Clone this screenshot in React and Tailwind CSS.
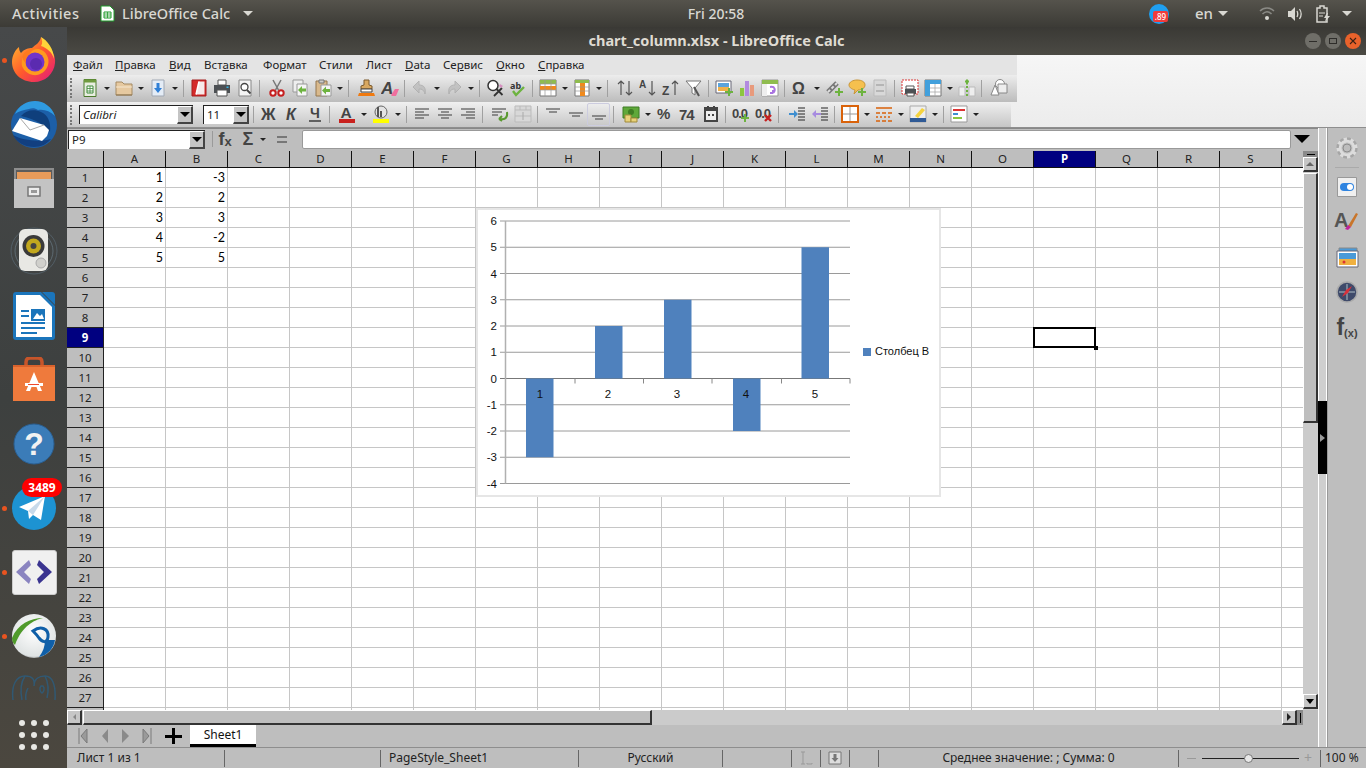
import { Fragment } from "react";

const UI = "font-['Noto_Sans',sans-serif]";

const S = ({ children, w = 18, vb = "0 0 18 18" }) => (
  <svg width={w} height={w} viewBox={vb} className="block">
    {children}
  </svg>
);

const lines = (ys, x1, x2, c = "#555") =>
  ys.map((y, i) => <path key={i} d={`M${x1[i] ?? x1[0]} ${y}H${x2[i] ?? x2[0]}`} stroke={c} strokeWidth="1.2" />);

const ICONS = {
  new: (
    <>
      <path d="M3 .5h12v17H3z" fill="#e8eee0" stroke="#4b7a2b" />
      <path d="M3 .5h12v3H3z" fill="#6f9a3f" />
      <path d="M6 7h6v7H6z" fill="#fff" stroke="#3f8a3a" />
      <path d="M6 9.500h6M6 12h6M9 7v7" stroke="#3f8a3a" strokeWidth=".8" />
    </>
  ),
  open: (
    <>
      <path d="M1 3h6l2 2h8v11H1z" fill="#e6c9a0" stroke="#a58a62" />
      <path d="M1 8h16" stroke="#f5e6cf" />
      <path d="M1 16h16" stroke="#8b7450" />
    </>
  ),
  save: (
    <>
      <path d="M3 1h12v16H3z" fill="#e4ecf6" stroke="#a0a8b4" />
      <path d="M7.500 4h3v5h2.500L9 14 5 9h2.500z" fill="#2f7fd6" />
    </>
  ),
  pdf: (
    <>
      <path d="M2 1h14v16H2z" fill="#d42a2a" stroke="#a51f1f" />
      <path d="M9 2.500h5.500v13H6z" fill="#f6eaea" />
      <path d="M9 2.500 6 15.500" stroke="#fff" strokeWidth="1.500" />
    </>
  ),
  print: (
    <>
      <path d="M5 1h8v5H5z" fill="#fff" stroke="#555" />
      <path d="M1 6h16v8H1z" fill="#4c5054" />
      <path d="M4 11h10v6H4z" fill="#fff" stroke="#555" />
      <path d="M13.500 7.500h2v1.500h-2z" fill="#35b4e6" />
    </>
  ),
  preview: (
    <>
      <path d="M3 1h12v16H3z" fill="#f4f4f4" stroke="#888" />
      <circle cx="8.500" cy="8" r="3.500" fill="#fff" stroke="#444" strokeWidth="1.300" />
      <path d="m11 11 3.500 3.500" stroke="#444" strokeWidth="1.800" />
    </>
  ),
  cut: (
    <>
      <path d="M5 1l5.500 10M13 1 7.500 11" stroke="#777" strokeWidth="1.500" />
      <circle cx="5" cy="14" r="2.700" fill="#fff" stroke="#c62020" strokeWidth="2" />
      <circle cx="13" cy="14" r="2.700" fill="#fff" stroke="#c62020" strokeWidth="2" />
    </>
  ),
  copy: (
    <>
      <path d="M2 1h10v12H2z" fill="#eee" stroke="#999" />
      <path d="M6 5h10v12H6z" fill="#f5f5f5" stroke="#999" />
      <path d="M7 11l4-4v2.500h4v3h-4V15z" fill="#6db33f" />
    </>
  ),
  paste: (
    <>
      <path d="M2 2h11v15H2z" fill="#d9b98c" stroke="#94774e" />
      <path d="M5 1h5v3H5z" fill="#ccc" stroke="#777" />
      <path d="M7 6h10v11H7z" fill="#f5f5f5" stroke="#999" />
      <path d="M8 11.500l4-4V10h4v3h-4v2.500z" fill="#6db33f" />
    </>
  ),
  clone: (
    <>
      <path d="M6 1h5v5l3 1v3H3V7l3-1z" fill="#d9a860" stroke="#7c5a2c" />
      <path d="M3 10h11v3H3z" fill="#fff" stroke="#444" />
      <path d="M1 14h15l1 3H0z" fill="#f07a10" />
    </>
  ),
  clear: (
    <>
      <text x="0" y="15" fontSize="17" fontWeight="700" fontStyle="italic" fill="#444" fontFamily="Liberation Sans">A</text>
      <path d="M10 16l4-6h4l-3 7h-4z" fill="#ef6f9e" />
    </>
  ),
  undo: <path d="M8 2 2 8l6 6v-4c3 0 5 1 6 5 1-6-1-9-6-9z" fill="#bdbdbd" stroke="#aaa" />,
  redo: <path d="M10 2l6 6-6 6v-4c-3 0-5 1-6 5-1-6 1-9 6-9z" fill="#bdbdbd" stroke="#aaa" />,
  find: (
    <>
      <circle cx="7" cy="6.500" r="5" fill="#fff" stroke="#333" strokeWidth="1.500" />
      <path d="m10.500 10 6 6M16 9l-8 8" stroke="#333" strokeWidth="1.800" />
      <path d="m14 5 3 2-2 2-2-2z" fill="#d68fc0" />
    </>
  ),
  spell: (
    <>
      <text x="1" y="10" fontSize="9" fontWeight="700" fill="#333" fontFamily="Noto Sans">ab</text>
      <path d="m4 12 3 4 8-8" fill="none" stroke="#6db33f" strokeWidth="2.400" />
    </>
  ),
  rows: (
    <>
      <path d="M1 1h16v16H1z" fill="#fff" stroke="#777" />
      <path d="M1 1h16v4H1z" fill="#8fbc4f" />
      <path d="M1 7h16v4H1z" fill="#f08a1d" />
      <path d="M1 5h16M1 11h16M6 1v16M12 1v16" stroke="#999" strokeWidth=".7" />
    </>
  ),
  cols: (
    <>
      <path d="M2 1h14v16H2z" fill="#fff" stroke="#777" />
      <path d="M2 1h14v3H2z" fill="#8fbc4f" />
      <path d="M7 4h5v13H7z" fill="#f08a1d" />
      <path d="M2 8h14M2 12h14" stroke="#999" strokeWidth=".7" />
    </>
  ),
  sort: <path d="M5 16V2M2 5l3-3 3 3M13 2v14M10 13l3 3 3-3" fill="none" stroke="#555" strokeWidth="1.200" />,
  sortaz: (
    <>
      <text x="0" y="9" fontSize="10" fontWeight="700" fill="#444" fontFamily="Liberation Sans">A</text>
      <path d="M13 2v14M10 13l3 3 3-3" fill="none" stroke="#555" strokeWidth="1.200" />
    </>
  ),
  sortza: (
    <>
      <text x="0" y="16" fontSize="12" fontWeight="700" fill="#444" fontFamily="Liberation Sans">Z</text>
      <path d="M13 16V2M10 5l3-3 3 3" fill="none" stroke="#555" strokeWidth="1.200" />
    </>
  ),
  filter: (
    <>
      <path d="M1 2h15l-6 7v7l-3-2V9z" fill="#fff" stroke="#777" />
      <path d="m9 8 5 9" stroke="#555" strokeWidth="2" />
    </>
  ),
  image: (
    <>
      <path d="M1 2h15v12H1z" fill="#fff" stroke="#667" />
      <path d="M3 4h11v4H3z" fill="#5aa3dc" />
      <path d="M3 8h11v4H3z" fill="#f0b04a" />
      <path d="M10 12h3v-3h2v3h3v2h-3v3h-2v-3h-3z" fill="#6db33f" />
    </>
  ),
  chart: (
    <>
      <path d="M2 9h4v8H2z" fill="#8cc63f" />
      <path d="M7 2h4v15H7z" fill="#b28ae0" />
      <path d="M12 6h4v11h-4z" fill="#e89a7c" />
    </>
  ),
  pivot: (
    <>
      <path d="M1 1h16v16H1z" fill="#fff" stroke="#999" />
      <path d="M1 1h16v4H1z" fill="#8fbc4f" />
      <path d="M1 5h5v12H1z" fill="#eee" />
      <path d="M9 8c5-1 6 3 3 6m0 0v-3m0 3H9" fill="none" stroke="#a974e0" strokeWidth="2" />
    </>
  ),
  omega: <text x="1" y="15" fontSize="16" fontWeight="700" fill="#444" fontFamily="Liberation Sans">Ω</text>,
  link: (
    <>
      <path d="m3 13 9-9" stroke="#777" strokeWidth="5" />
      <path d="m3 13 9-9" stroke="#ddd" strokeWidth="2" strokeDasharray="3 2" />
      <path d="M10 12h3V9h2v3h3v2h-3v3h-2v-3h-3z" fill="#6db33f" />
    </>
  ),
  comment: (
    <>
      <path d="M9 1c5 0 8 2 8 5s-3 5-7 5l-4 4 1-4c-4-1-6-3-6-5 0-3 4-5 8-5z" fill="#f5c04e" stroke="#c9963a" />
      <path d="M10 12h3V9h2v3h3v2h-3v3h-2v-3h-3z" fill="#6db33f" />
    </>
  ),
  header: (
    <>
      <path d="M3 1h12v16H3z" fill="#d8d8d8" stroke="#bbb" />
      <path d="M5 5h8v2H5zM5 11h8v2H5z" fill="#b5b5b5" />
    </>
  ),
  printarea: (
    <>
      <path d="M1 1h16v14H1z" fill="#fff" stroke="#d33" strokeDasharray="2 1" />
      <path d="M5 7h8v3H5z" fill="#fff" stroke="#555" />
      <path d="M4 10h11v5H4z" fill="#4c5054" />
      <path d="M6 14h7v3H6z" fill="#fff" stroke="#555" />
    </>
  ),
  freeze: (
    <>
      <path d="M1 1h16v16H1z" fill="#fff" stroke="#777" />
      <path d="M1 1h16v4H1zM1 5h5v12H1z" fill="#42a0dc" />
      <path d="M6 9h11M6 13h11M11 5v12" stroke="#aaa" strokeWidth=".8" />
    </>
  ),
  split: (
    <>
      <path d="M1 8h6v9H1zM11 8h6v9h-6z" fill="#eee" stroke="#bbb" />
      <path d="M7 2.500h4M9 .5v5M9 7v2M9 11v2M9 15v2" stroke="#6db33f" strokeWidth="2" fill="none" />
    </>
  ),
  shapes: (
    <>
      <circle cx="10" cy="5" r="4.500" fill="#fff" stroke="#888" />
      <path d="M8 5h9v9H8z" fill="#eee" stroke="#888" />
      <path d="M5 6 1 16h8z" fill="#fff" stroke="#888" />
    </>
  ),
  bold: <text x="1" y="15" fontSize="16" fontWeight="700" fill="#444" fontFamily="Liberation Sans">Ж</text>,
  italic: <text x="3" y="15" fontSize="16" fontWeight="700" fontStyle="italic" fill="#444" fontFamily="Liberation Sans">К</text>,
  under: (
    <>
      <text x="4" y="13" fontSize="14" fontWeight="700" fill="#444" fontFamily="Liberation Sans">Ч</text>
      <path d="M3 16h12" stroke="#444" strokeWidth="1.600" />
    </>
  ),
  color: (
    <>
      <text x="2.500" y="13" fontSize="15.500" fontWeight="700" fill="#444" fontFamily="Liberation Sans">A</text>
      <path d="M1 14h16v4H1z" fill="#c9211e" />
    </>
  ),
  hl: (
    <>
      <circle cx="9" cy="7" r="6" fill="#e4e4e4" stroke="#666" />
      <path d="M6 2v10M9 6v6" stroke="#555" strokeWidth="2" />
      <path d="M1 14h16v4H1z" fill="#ffff00" />
    </>
  ),
  left: lines([4, 7, 10, 13], [2], [16, 11, 16, 11]),
  center: lines([4, 7, 10, 13], [2, 5, 2, 5], [16, 13, 16, 13]),
  right: lines([4, 7, 10, 13], [2, 7, 2, 7], [16]),
  wrap: (
    <>
      {lines([4, 7, 10], [1], [15, 11, 7])}
      <path d="M16 7c1 6-2 8-8 7m0 0 3-3m-3 3 3 2" fill="none" stroke="#5a9a30" strokeWidth="2" />
    </>
  ),
  merge: (
    <>
      <path d="M1 1h16v16H1z" fill="#d8d8d8" stroke="#bbb" />
      <path d="M1 5h16M6 1v4M12 1v4M1 11h16" stroke="#bbb" />
      <path d="M9 7v8" stroke="#aaa" />
    </>
  ),
  top: lines([4, 7], [2, 5], [16, 13]),
  mid: lines([8, 11], [2, 5], [16, 13]),
  bottom: lines([11, 14], [2, 5], [16, 13]),
  currency: (
    <>
      <path d="M1 2h16v11H1z" fill="#5fa83a" stroke="#3f7d24" />
      <circle cx="9" cy="7" r="3" fill="#3f7d24" />
      <path d="M3 10h6v7H3z" fill="#e8d27a" stroke="#a08a3a" />
      <path d="M9 13h6v4H9z" fill="#e8d27a" stroke="#a08a3a" />
    </>
  ),
  percent: <text x="1" y="14" fontSize="15" fontWeight="700" fill="#444" fontFamily="Liberation Sans">%</text>,
  num: <text x="0" y="15" fontSize="15" fontWeight="700" fill="#444" fontFamily="Liberation Sans" letterSpacing="-1">74</text>,
  date: (
    <>
      <path d="M2 2h14v15H2z" fill="#444" />
      <path d="M4 6h10v9H4z" fill="#eee" />
      <path d="M5 1h2v3H5zM11 1h2v3h-2z" fill="#444" />
      <path d="M6 9h2v2H6zM10 9h2v2h-2z" fill="#444" />
    </>
  ),
  addDec: (
    <>
      <text x="0" y="13" fontSize="13" fontWeight="700" fill="#444" fontFamily="Liberation Sans" letterSpacing="-1">0.0</text>
      <path d="M9 12h3V9h2v3h3v2h-3v3h-2v-3H9z" fill="#6db33f" />
    </>
  ),
  delDec: (
    <>
      <text x="0" y="13" fontSize="13" fontWeight="700" fill="#444" fontFamily="Liberation Sans" letterSpacing="-1">0.0</text>
      <path d="m10 10 6 6m0-6-6 6" stroke="#c62020" strokeWidth="2.400" />
    </>
  ),
  indent: (
    <>
      {lines([3, 6, 9, 12, 15], [10], [17], "#444")}
      <path d="M1 8h5V5l4 4-4 4v-3H1z" fill="#3f8fd0" />
    </>
  ),
  outdent: (
    <>
      {lines([3, 6, 9, 12, 15], [10], [17], "#444")}
      <path d="M10 8H5V5L1 9l4 4v-3h5z" fill="#a78be0" />
    </>
  ),
  border: (
    <>
      <path d="M1 1h16v16H1z" fill="#fff" stroke="#d9620a" strokeWidth="2" />
      <path d="M9 2v14M2 9h14" stroke="#999" />
    </>
  ),
  line: <path d="M1 3h16M1 8h4m2 0h4m2 0h4M1 12h2m2 0h2m2 0h2m2 0h2M1 16h4m2 0h4m2 0h4" stroke="#d9620a" strokeWidth="1.300" />,
  bg: (
    <>
      <path d="M1 1h16v16H1z" fill="#eee" stroke="#aaa" />
      <path d="M1 13h16v4H1z" fill="#2f5a96" />
      <path d="m6 11 7-8 3 2-7 8z" fill="#f5d33f" />
    </>
  ),
  cond: (
    <>
      <path d="M1 1h16v16H1z" fill="#fff" stroke="#999" />
      <path d="M3 4h12v2H3z" fill="#d33" />
      <path d="M3 8h5v2H3z" fill="#3f8fd0" />
      <path d="M3 12h9v2H3z" fill="#8cc63f" />
    </>
  ),
};

const row1 = ["new", "dd", "open", "dd", "save", "dd", "sep", "pdf", "print", "preview", "sep", "gap2", "cut", "copy", "paste", "dd", "sep", "gap3", "clone", "clear", "sep", "undo", "dd", "redo", "dd", "sep", "find", "spell", "sep", "rows", "dd", "cols", "dd", "sep", "gap2", "sort", "sortaz", "sortza", "filter", "sep", "image", "chart", "pivot", "sep", "omega", "dd", "link", "comment", "header", "sep", "printarea", "freeze", "dd", "split", "sep", "gap2", "shapes"];
const row2 = ["bold", "italic", "under", "sep", "gap2", "color", "dd", "hl", "dd", "sep", "left", "center", "right", "sep", "gap2", "wrap", "merge", "sep", "top", "mid", "bottom", "sep", "gap2", "currency", "dd", "percent", "num", "date", "sep", "addDec", "delDec", "sep", "gap3", "indent", "outdent", "sep", "border", "dd", "line", "dd", "bg", "dd", "sep", "cond", "dd"];

const Tools = ({ items }) =>
  items.map((t, i) => {
    if (t === "dd")
      return (
        <span key={i} className="w-[11px] flex justify-center">
          <span className="border-x-[3px] border-t-[3px] border-x-transparent border-t-[#222]" />
        </span>
      );
    if (t === "sep")
      return (
        <span key={i} className="w-[7px] flex justify-center">
          <span className="w-px h-[17px] bg-[#a0a0a0]" />
        </span>
      );
    if (t === "gap2") return <span key={i} className="w-[2px]" />;
    if (t === "gap3") return <span key={i} className="w-[3px]" />;
    return (
      <span
        key={i}
        className={`w-[23px] h-[23px] flex items-center justify-center ${t === "bottom" ? "border border-[#ccccdf] rounded-[2px]" : ""} ${t === "undo" || t === "redo" ? "opacity-80" : ""}`}
      >
        <S>{ICONS[t]}</S>
      </span>
    );
  });

const Grip = () => <span className="absolute left-[3px] top-[3px] h-[20px] border-l-2 border-dotted border-[#777]" />;

const ComboBtn = () => (
  <span className="w-[16px] self-stretch bg-[#c4c4c4] border-l border-t border-white border-r-2 border-b-2 border-r-[#444] border-b-[#444] flex items-center justify-center">
    <span className="border-x-[5px] border-t-[5px] border-x-transparent border-t-black" />
  </span>
);

const menus = [
  ["Ф", "айл", "w-[42px]"],
  ["П", "равка", "w-[54px]"],
  ["В", "ид", "w-[35px]"],
  ["Вст", "авка", "w-[59px]", 1],
  ["Фо", "рмат", "w-[56px]", 1],
  ["С", "тили", "w-[47px]", 2],
  ["Л", "ист", "w-[39px]", 2],
  ["D", "ata", "w-[38px]"],
  ["Се", "рвис", "w-[53px]", 1],
  ["О", "кно", "w-[42px]"],
  ["С", "правка", "w-[60px]"],
];

const Menu = () => (
  <div className={`h-[20px] flex items-center pl-[6px] pb-px text-[11.5px] text-[#222] ${UI}`}>
    {menus.map(([a, b, w, plain]) => (
      <span key={a + b} className={`${w} whitespace-nowrap`}>
        {plain === 2 ? (
          a + b
        ) : plain === 1 ? (
          <>
            {a}
            <u>{b[0]}</u>
            {b.slice(1)}
          </>
        ) : (
          <>
            <u>{a}</u>
            {b}
          </>
        )}
      </span>
    ))}
  </div>
);

const cols = "ABCDEFGHIJKLMNOPQRS".split("");
const rows = Array.from({ length: 28 }, (_, i) => i + 1);
const data = { 1: [1, -3], 2: [2, 2], 3: [3, 3], 4: [4, -2], 5: [5, 5] };

const Chart = () => {
  const yFor = (v) => 378.5 - v * 26.25;
  const bars = [
    [526, -3],
    [595, 2],
    [664, 3],
    [733, -2],
    [801.5, 5],
  ];
  const ticks = [6, 5, 4, 3, 2, 1, 0, -1, -2, -3, -4];
  return (
    <div className="absolute left-[409px] top-[57px] w-[465px] h-[289px] bg-white border-2 border-[#e6e6e6]">
      <svg width="461" height="285" viewBox="478 210 461 285" className="block" fontFamily="Liberation Sans, sans-serif" fontSize="11.5">
        {ticks.map((t) => (
          <g key={t}>
            <path d={`M500 ${yFor(t)}H850`} stroke={t === 0 ? "#777" : "#9a9a9a"} strokeWidth="1" />
            <text x="497" y={yFor(t) + 4} textAnchor="end" fill="#111">{t}</text>
          </g>
        ))}
        <path d="M505.500 221v262.500" stroke="#b0b0b0" strokeWidth="1.500" />
        {bars.map(([x, v]) => (
          <rect key={x} x={x} y={v > 0 ? yFor(v) : yFor(0)} width="27.5" height={Math.abs(v) * 26.25} fill="#4f81bd" />
        ))}
        {[575, 643.5, 712, 781.5, 850].map((x) => (
          <path key={x} d={`M${x} 378.5v5`} stroke="#888" />
        ))}
        {[540, 608, 677, 746, 815].map((x, i) => (
          <text key={x} x={x} y="398" textAnchor="middle" fill="#111">{i + 1}</text>
        ))}
        <rect x="863" y="348" width="8" height="8" fill="#4f81bd" />
        <text x="875" y="355" fontSize="11" fill="#111">Столбец B</text>
      </svg>
    </div>
  );
};

const Sheet = () => (
  <div className={`relative flex-1 overflow-hidden bg-white ${UI}`}>
    <div className="flex h-[17px] bg-[#bebebe] border-b border-[#111] text-[11.5px] text-[#222]">
      <div className="w-[37px] shrink-0 border-r border-[#111]" />
      {cols.map((c) => (
        <div
          key={c}
          className={`w-[62px] shrink-0 flex items-center justify-center border-r border-[#111] ${c === "P" ? "bg-[#000080] text-white font-bold" : ""}`}
        >
          {c}
        </div>
      ))}
    </div>
    {rows.map((r) => (
      <div key={r} className="flex h-[20px]">
        <div
          className={`w-[37px] shrink-0 flex items-center justify-center border-r border-b border-[#222] text-[11.5px] ${r === 9 ? "bg-[#000080] text-white font-bold" : "bg-[#bebebe] text-[#222]"}`}
        >
          {r < 28 ? r : ""}
        </div>
        {cols.map((c, i) => (
          <div
            key={c}
            className="relative w-[62px] shrink-0 border-r border-b border-[#c6c6c6] flex items-center justify-end pr-[2px] pt-px text-[12.5px] text-black font-['Lato',sans-serif]"
          >
            {i < 2 && data[r] ? data[r][i] : ""}
            {c === "P" && r === 9 && (
              <>
                <span className="absolute z-10 -left-px -top-px w-[63px] h-[21px] border-2 border-black" />
                <span className="absolute z-10 -right-[3px] -bottom-[3px] w-[4px] h-[4px] bg-black" />
              </>
            )}
          </div>
        ))}
        <div className="w-[22px] shrink-0 border-b border-[#c6c6c6]" />
      </div>
    ))}
    <Chart />
  </div>
);

const Arrow = ({ dir }) => {
  if (dir === "up") return <span className="border-x-[4px] border-b-[4px] border-x-transparent border-b-[#666]" />;
  if (dir === "down") return <span className="border-x-[4px] border-t-[5px] border-x-transparent border-t-black" />;
  return <span className="border-y-[4px] border-l-[4px] border-y-transparent border-l-[#222]" />;
};

const ScrollBtn = ({ children, className = "" }) => (
  <div className={`bg-[#c6c6c6] border-l border-t border-white border-r-2 border-b-2 border-r-[#333] border-b-[#333] flex items-center justify-center ${className}`}>
    {children}
  </div>
);

const VScroll = () => (
  <div className="w-[15px] shrink-0 flex flex-col bg-[#cbcbcb]">
    <div className="h-[6px] bg-[#8a8a8a] flex items-center justify-center">
      <span className="w-[8px] h-px bg-black" />
    </div>
    <ScrollBtn className="h-[15px]">
      <Arrow dir="up" />
    </ScrollBtn>
    <div className="h-[250px] mt-px bg-[#bebebe] border-l border-t border-white border-r-2 border-b-2 border-r-[#333] border-b-[#333]" />
    <div className="flex-1" />
    <ScrollBtn className="h-[15px] mb-px">
      <Arrow dir="down" />
    </ScrollBtn>
  </div>
);

const HScroll = () => (
  <div className="h-[15px] flex bg-[#cbcbcb]">
    <ScrollBtn className="w-[15px]">
      <span className="border-y-[3px] border-r-[3px] border-y-transparent border-r-[#888]" />
    </ScrollBtn>
    <div className="ml-px w-[569px] bg-[#bebebe] border-l border-t border-white border-r-2 border-b-2 border-r-[#333] border-b-[#333]" />
    <div className="flex-1" />
    <ScrollBtn className="w-[15px]">
      <Arrow dir="right" />
    </ScrollBtn>
    <div className="w-[6px] bg-[#8a8a8a] flex items-center justify-center">
      <span className="h-[10px] w-px bg-black" />
    </div>
    <div className="w-[15px] bg-[#bebebe]" />
  </div>
);

const Tabs = () => (
  <div className={`h-[22px] bg-[#bebebe] flex items-center ${UI}`}>
    <svg width="80" height="18" viewBox="0 0 80 18" className="ml-[11px] shrink-0">
      <path d="M1 1v16M9 2 3 9l6 7z" fill="#9a9a9a" stroke="#7a7a7a" />
      <path d="M30 2l-6 7 6 7z" fill="#8a8a8a" />
      <path d="M44 2l7 7-7 7z" fill="#8a8a8a" />
      <path d="M65 2l6 7-6 7zM73 1v16" fill="#9a9a9a" stroke="#7a7a7a" />
    </svg>
    <span className="ml-[7px] w-[16px] h-[16px] relative shrink-0">
      <span className="absolute left-[7px] top-0 w-[3px] h-[16px] bg-black" />
      <span className="absolute left-0 top-[7px] w-[17px] h-[3px] bg-black" />
    </span>
    <div className="ml-[9px] w-[66px] h-[22px] bg-white border-b-[3px] border-black flex items-center justify-center text-[12px] text-[#111]">
      Sheet1
    </div>
  </div>
);

const statusCells = [
  ["w-[158px]", "Лист 1 из 1", "pl-[10px]"],
  ["w-[156px]", "", ""],
  ["w-[198px]", "PageStyle_Sheet1", "pl-[8px]"],
  ["w-[144px]", "Русский", "justify-center"],
  ["w-[69px]", "", ""],
];

const Status = () => (
  <div className={`h-[21px] flex items-center bg-[#bebebe] border-t border-[#8e8e8e] text-[12px] text-[#222] ${UI}`}>
    {statusCells.map(([w, t, extra], i) => (
      <div key={i} className={`${w} h-[17px] flex items-center border-r border-[#666] ${extra}`}>
        {t}
      </div>
    ))}
    <div className="w-[29px] h-[17px] flex items-center justify-center border-r border-[#666]">
      <svg width="14" height="14" viewBox="0 0 14 14">
        <path d="M2 1h4M4 1v12M2 13h4M8 12v1h5v-1" fill="none" stroke="#999" />
      </svg>
    </div>
    <div className="w-[29px] h-[17px] flex items-center justify-center border-r border-[#666]">
      <svg width="14" height="14" viewBox="0 0 14 14">
        <path d="M1 1h12v12H1z" fill="#ddd" stroke="#777" />
        <path d="M5.500 3h3v4h2L7 11 3.500 7h2z" fill="#777" />
      </svg>
    </div>
    <div className="w-[29px] h-[17px] border-r border-[#666]" />
    <div className="w-[300px] h-[17px] flex items-center justify-center border-r border-[#666]">
      Среднее значение: ; Сумма: 0
    </div>
    <div className="w-[142px] h-[17px] flex items-center border-r border-[#666] pl-[8px]">
      <span className="w-[9px] h-px bg-[#999]" />
      <span className="relative ml-[6px] w-[97px] h-px bg-[#222]">
        <span className="absolute left-[42px] -top-[4px] w-[9px] h-[9px] rounded-full bg-[#e8e8e8] border border-[#777]" />
      </span>
      <span className="ml-[5px] text-[#999] text-[14px] leading-none">+</span>
    </div>
    <div className="flex-1 pl-[4px] whitespace-nowrap">100 %</div>
  </div>
);

const Sidebar = () => (
  <div className="flex-1 bg-[#bebebe] flex flex-col items-center pt-[9px] border-l border-[#999]">
    <svg width="22" height="22" viewBox="0 0 22 22">
      <circle cx="11" cy="11" r="8" fill="none" stroke="#dcdcdc" strokeWidth="5" />
      <circle cx="11" cy="11" r="9.500" fill="none" stroke="#a6a6a6" strokeWidth="2.500" strokeDasharray="4 3.400" />
      <circle cx="11" cy="11" r="4" fill="#bdbdbd" stroke="#8c8c8c" />
    </svg>
    <span className="w-[24px] h-px bg-[#aaa] mt-[8px]" />
    <svg width="20" height="20" viewBox="0 0 20 20" className="mt-[9px]">
      <path d="M.5.5h19v19H.5z" fill="#f0f0f0" stroke="#999" />
      <rect x="3" y="6" width="14" height="8" rx="4" fill="#2f84e0" />
      <circle cx="13" cy="10" r="3" fill="#fff" />
    </svg>
    <svg width="26" height="26" viewBox="0 0 26 26" className="mt-[10px] overflow-visible">
      <text x="0" y="20" fontSize="20" fontWeight="700" fill="#555" fontFamily="Liberation Sans">A</text>
      <path d="m14 19 8-13 2 1-7 13z" fill="#c9752a" />
      <path d="m11 22 3-4 3 2-3 3z" fill="#c0239a" />
    </svg>
    <svg width="24" height="22" viewBox="0 0 24 22" className="mt-[14px]">
      <path d="M4 1h18v4H4z" fill="#4a9ad8" stroke="#888" />
      <path d="M2 4h21v16H2z" fill="#fff" stroke="#667" />
      <path d="M4 6h17v6H4z" fill="#4a9ad8" />
      <path d="M4 12h17v6H4z" fill="#f0b040" />
      <circle cx="9" cy="15" r="1.500" fill="#d33" />
    </svg>
    <svg width="22" height="22" viewBox="0 0 22 22" className="mt-[12px]">
      <circle cx="11" cy="11" r="10" fill="#3f4a6a" stroke="#aaa" strokeWidth="1.500" />
      <path d="M11 3v16M3 11h16" stroke="#cdd" strokeWidth=".8" />
      <path d="m16 5-4 7-6 4 4-7z" fill="#d8303a" />
    </svg>
    <div className="mt-[13px] flex items-end text-[#444] font-['Liberation_Sans',sans-serif] leading-none">
      <span className="text-[23px] font-bold">f</span>
      <span className="text-[11px] font-bold">(x)</span>
    </div>
  </div>
);

const Handle = () => (
  <div className="w-[9px] shrink-0 flex flex-col bg-[#cfcfcf]">
    <div className="h-[273px] border-x border-white" />
    <div className="h-[73px] bg-black flex items-center justify-center">
      <span className="border-y-[4px] border-l-[5px] border-y-transparent border-l-[#999]" />
    </div>
    <div className="flex-1 border-x border-white" />
  </div>
);

const FormulaBar = () => (
  <div className={`h-[23px] bg-[#bebebe] flex items-center pl-px pb-[2px] border-t border-[#888] ${UI}`}>
    <div className="w-[137px] h-[19px] flex items-center bg-white border-t border-l border-[#222]">
      <span className="flex-1 pl-[3px] text-[11.5px] text-[#222]">P9</span>
      <ComboBtn />
    </div>
    <span className="ml-[7px] w-px h-[16px] bg-[#9a9a9a]" />
    <span className="ml-[1px] w-[22px] flex items-end justify-center text-[#444] font-['Liberation_Sans',sans-serif] font-bold leading-none">
      <span className="text-[18px]">f</span>
      <span className="text-[13px]">x</span>
    </span>
    <span className="ml-[1px] w-[22px] text-center text-[18px] font-bold text-[#444] leading-none font-['Liberation_Sans',sans-serif]">Σ</span>
    <span className="ml-[1px] border-x-[3px] border-t-[3px] border-x-transparent border-t-[#222]" />
    <span className="ml-[11px] w-[10px] flex flex-col gap-[3px]">
      <span className="h-[2px] bg-[#777]" />
      <span className="h-[2px] bg-[#777]" />
    </span>
    <div className="ml-[15px] w-[989px] h-[19px] bg-white border border-[#999] rounded-[2px]" />
    <span className="ml-[2px] w-[18px] flex justify-center">
      <span className="border-x-[8px] border-t-[8px] border-x-transparent border-t-black" />
    </span>
  </div>
);

const Firefox = () => (
  <svg width="48" height="48" viewBox="0 0 48 48">
    <defs>
      <linearGradient id="ff" x1="0" y1="0" x2="1" y2="1">
        <stop offset="0" stopColor="#ffc22e" />
        <stop offset=".5" stopColor="#ff5a2c" />
        <stop offset="1" stopColor="#e3177e" />
      </linearGradient>
    </defs>
    <path d="M31 1c3 3 5 7 5 9 6 4 10 10 9 17-1 11-10 19-21 19C11 46 2 37 2 26 2 19 6 13 9 11c0 3 1 5 2 6 3-4 8-5 11-5 3-3 8-5 9-11z" fill="url(#ff)" />
    <path d="M31 1c6 3 13 12 13 22-2-7-7-11-13-13 2-3 1-6 0-9z" fill="#ffd43a" />
    <path d="M12 30C10 19 19 12 29 13c7 2 11 9 9 16-2 7-9 11-15 10-5-1-9-4-11-9z" fill="#ff9a1e" />
    <circle cx="25" cy="26" r="9.500" fill="#7135c9" />
    <circle cx="26" cy="28" r="6" fill="#5b2bb0" />
    <path d="M13 19c3-5 10-8 15-6-4 0-7 2-8 5-3 2-5 5-4 9-3-2-4-5-3-8z" fill="#ff7a1e" />
  </svg>
);

const Thunderbird = () => (
  <svg width="50" height="50" viewBox="0 0 50 50">
    <circle cx="25" cy="26" r="23" fill="#1c5fa8" />
    <path d="M6 15C10 6 18 2 26 2c9 0 17 6 20 15-5-5-11-7-17-6-3-2-6-2-9-1-5 1-10 2-14 5z" fill="#2f9ae0" />
    <path d="M12 17c5-6 13-7 20-4 7 3 10 10 9 20-6-7-12-12-29-16z" fill="#0f3f7c" />
    <path d="M4 36c4 8 12 12 21 12 7 0 13-3 17-8-10 3-28 2-38-4z" fill="#123f80" />
    <path d="M11 19 35 26l5 5-2 6-5 5L3 32z" fill="#fff" />
    <path d="M11 19l10 12 14-5" fill="none" stroke="#a8a8a8" />
  </svg>
);

const Files = () => (
  <svg width="42" height="44" viewBox="0 0 42 44">
    <path d="M1 2h40v40H1z" fill="#8e8e8e" />
    <path d="M3 4h36v9H3z" fill="#5c5c5c" />
    <path d="M4 6h34v7H4z" fill="#e89b5a" />
    <path d="M1 13h40v29H1z" fill="#c3c3c3" />
    <path d="M15 21h12v9H15z" fill="#ececec" stroke="#777" strokeWidth="1.500" />
    <path d="M18 24h6v3h-6z" fill="#999" />
  </svg>
);

const Speaker = () => (
  <svg width="50" height="50" viewBox="0 0 50 50">
    <circle cx="25" cy="24" r="23" fill="none" stroke="#5a6a75" strokeWidth="1" opacity=".7" />
    <circle cx="25" cy="24" r="19" fill="none" stroke="#6a7a85" strokeWidth="1" opacity=".7" />
    <rect x="10" y="2" width="29" height="42" rx="6" fill="#e8e8e4" />
    <circle cx="24.500" cy="19" r="11" fill="#3a3a3a" />
    <circle cx="24.500" cy="19" r="7.500" fill="#c2a81e" />
    <circle cx="24.500" cy="19" r="3" fill="#444" />
    <circle cx="32" cy="36" r="5" fill="#d0d0cc" stroke="#aaa" />
  </svg>
);

const Writer = () => (
  <svg width="42" height="48" viewBox="0 0 42 48">
    <path d="M0 3a3 3 0 0 1 3-3h25l14 14v31a3 3 0 0 1-3 3H3a3 3 0 0 1-3-3z" fill="#1b75bb" />
    <path d="M3 3h24l12 12v30H3z" fill="#fff" />
    <path d="M29 0h10a3 3 0 0 1 3 3v10z" fill="#1b75bb" />
    <path d="M8 18h8v2H8zM8 23h8v2H8zM8 30h24v2H8zM8 35h24v2H8zM8 40h16v2H8z" fill="#1b75bb" />
    <path d="M18 17h14v12H18z" fill="#1b75bb" />
    <path d="M20 27l4-6 3 3 2-2 2 5z" fill="#fff" />
  </svg>
);

const Bag = () => (
  <svg width="44" height="46" viewBox="0 0 44 46">
    <path d="M14 10V5q0-4 4-4h8q4 0 4 4v5" fill="none" stroke="#c7552a" strokeWidth="3.500" />
    <path d="M1 8h42v36H1z" fill="#ef7a3c" />
    <path d="M1 8h42v2H1z" fill="#d9622c" />
    <path d="M22 15 14 34h4l1.500-4h5l1.500 4h4z" fill="#fff" />
    <path d="M13 26h18v3H13z" fill="#fff" />
    <path d="M16 27h11v1H16z" fill="#ef4a2c" />
  </svg>
);

const Help = () => (
  <svg width="42" height="42" viewBox="0 0 42 42">
    <circle cx="21" cy="21" r="20" fill="#3b7cb8" />
    <circle cx="21" cy="21" r="20" fill="none" stroke="#2a5f92" />
    <text x="21" y="32" textAnchor="middle" fontSize="32" fontWeight="700" fill="#f2f2f2" fontFamily="Liberation Sans">?</text>
  </svg>
);

const Telegram = () => (
  <svg width="44" height="44" viewBox="0 0 44 44">
    <circle cx="22" cy="22" r="22" fill="#1d93d2" />
    <path d="M7 21 33 10l-4 24-8-5-4 4-1-8z" fill="#fff" />
    <path d="M16 25 33 10 21 29z" fill="#c8daea" />
  </svg>
);

const Codelite = () => (
  <div className="w-[45px] h-[45px] rounded-[3px] bg-[#f0f0f0] border border-[#ccc] flex items-center justify-center">
    <svg width="38" height="26" viewBox="0 0 38 26">
      <path d="M14 1 1 13l13 12 2-5-7-7 7-7z" fill="#8a84c0" />
      <path d="M24 1l13 12-13 12-2-5 7-7-7-7z" fill="#3a3490" />
    </svg>
  </div>
);

const Globe = () => (
  <svg width="44" height="44" viewBox="0 0 44 44">
    <defs>
      <radialGradient id="gl" cx=".5" cy=".4" r=".7">
        <stop offset="0" stopColor="#fff" />
        <stop offset=".8" stopColor="#dfe3e3" />
        <stop offset="1" stopColor="#222" />
      </radialGradient>
    </defs>
    <circle cx="22" cy="22" r="22" fill="url(#gl)" />
    <path d="M0 24C6 10 18 4 31 4c-9 2-21 8-28 27-2-2-3-4-3-7z" fill="#4f9a2a" />
    <path d="M21 17c8-6 16-2 15 6-1 7-6 5-9 1-2-3-4-5-6-7z" fill="none" stroke="#0f5fa8" strokeWidth="3" />
    <path d="M33 26h10c-1 8-7 15-16 17 4-5 6-11 6-17z" fill="#0f5fa8" />
  </svg>
);

const Dolphin = () => (
  <svg width="46" height="30" viewBox="0 0 46 30" fill="none" stroke="#2f5b78" strokeWidth="1.500" opacity=".9">
    <path d="M2 26C0 10 6 2 14 2s10 4 9 10M23 12c0-7 5-10 11-10 7 0 11 8 10 24" />
    <path d="M14 2c-4 6-5 14-3 24M17 14c-2 4-3 8-2 12M34 2c3 6 4 14 2 22" />
    <path d="M30 12c-2 2-1 6 1 7 2-1 3-5 1-7z" />
  </svg>
);

const Dots = () => (
  <div className="grid grid-cols-3 gap-x-[6px] gap-y-[6px]">
    {Array.from({ length: 9 }, (_, i) => (
      <span key={i} className="w-[6px] h-[6px] rounded-full bg-[#e8e8e4]" />
    ))}
  </div>
);

const dock = [
  [<Firefox key="a" />, true],
  [<Thunderbird key="a" />, false],
  [<Files key="a" />, false],
  [<Speaker key="a" />, false],
  [<Writer key="a" />, false],
  [<Bag key="a" />, false],
  [<Help key="a" />, false],
  [
    <Fragment key="a">
      <Telegram />
      <span className="absolute left-[22px] top-[2px] w-[40px] h-[19px] rounded-full bg-[#ff0000] text-white text-[12px] font-bold leading-[19px] text-center font-['Noto_Sans',sans-serif]">
        3489
      </span>
    </Fragment>,
    true,
  ],
  [<Codelite key="a" />, true],
  [<Globe key="a" />, true],
];

const Dock = () => (
  <div className="w-[67px] shrink-0 flex flex-col pt-[1px] bg-linear-to-b from-[#47494a] via-[#3d403f] to-[#4b473f]">
    {dock.map(([icon, active], i) => (
      <div key={i} className="relative h-[64px] shrink-0 flex items-center justify-center pl-px">
        {icon}
        {active && <span className="absolute left-[2px] top-[30px] w-[5px] h-[5px] rounded-full bg-[#e95420]" />}
      </div>
    ))}
    <div className="h-[42px] shrink-0 flex items-center justify-center pl-px">
      <Dolphin />
    </div>
    <div className="flex justify-center mt-[10px]">
      <Dots />
    </div>
  </div>
);

const TopBar = () => (
  <div className={`h-[27px] shrink-0 flex items-center bg-linear-to-b from-[#55534c] to-[#3c3b36] text-[#d9d8d2] text-[14.5px] font-medium ${UI}`}>
    <span className="ml-[12px] w-[88px] tracking-[0.5px]">Activities</span>
    <svg width="15" height="17" viewBox="0 0 15 17" className="shrink-0">
      <path d="M1 1h9l4 4v11H1z" fill="#fff" stroke="#1e9b2a" />
      <path d="M4 7h7v6H4z" fill="#fff" stroke="#1e9b2a" />
      <path d="M4 9h7M4 11h7M7.500 7v6" stroke="#1e9b2a" strokeWidth=".8" />
    </svg>
    <span className="ml-[7px] w-[121px] whitespace-nowrap">LibreOffice Calc</span>
    <span className="border-x-[5px] border-t-[5px] border-x-transparent border-t-[#d9d8d2]" />
    <span className="ml-[433px] w-[60px] text-center whitespace-nowrap text-[14px]">Fri 20:58</span>
    <span className="relative ml-[403px] w-[20px] h-[20px] rounded-full bg-[#1f9ff0] shrink-0">
      <span className="absolute left-[4px] top-[7px] w-[15px] h-[11px] rounded-[2px] bg-[#ef3b3b] text-white text-[8px] leading-[11px] text-center">.89</span>
    </span>
    <span className="ml-[26px] w-[22px] text-[15px]">en</span>
    <span className="ml-[1px] border-x-[5px] border-t-[5px] border-x-transparent border-t-[#d9d8d2]" />
    <svg width="16" height="14" viewBox="0 0 16 14" className="ml-[31px] shrink-0">
      <path d="M1 4c4-4 10-4 14 0M3.500 7c3-3 6-3 9 0" fill="none" stroke="#8a8a85" strokeWidth="1.500" />
      <circle cx="8" cy="11" r="2" fill="#d9d8d2" />
    </svg>
    <svg width="16" height="16" viewBox="0 0 16 16" className="ml-[12px] shrink-0">
      <path d="M1 5h3l4-4v14l-4-4H1z" fill="#d9d8d2" />
      <path d="M10 5c1 2 1 4 0 6M12.500 3c2 3 2 7 0 10" fill="none" stroke="#d9d8d2" strokeWidth="1.300" />
    </svg>
    <svg width="16" height="18" viewBox="0 0 16 18" className="ml-[12px] shrink-0">
      <path d="M2 3h3V1h4v2h3v14H2z" fill="none" stroke="#d9d8d2" strokeWidth="1.500" />
      <path d="M4 8h6M4 11h4" stroke="#d9d8d2" />
      <path d="m12 8-3 5h2l-1 4 5-6h-3l1-3z" fill="#d9d8d2" />
    </svg>
    <span className="ml-[11px] border-x-[5px] border-t-[5px] border-x-transparent border-t-[#d9d8d2]" />
  </div>
);

const WindowBtn = ({ className, children }) => (
  <span className={`w-[16px] h-[16px] rounded-full flex items-center justify-center ${className}`}>{children}</span>
);

const TitleBar = () => (
  <div className={`relative h-[28px] shrink-0 flex items-center justify-center bg-linear-to-b from-[#3a3935] to-[#4b4a44] text-[#dfdbd2] text-[14.5px] font-bold ${UI}`}>
    chart_column.xlsx - LibreOffice Calc
    <div className="absolute right-[5px] top-[6px] flex gap-[4px]">
      <WindowBtn className="bg-[#6f6e68]">
        <span className="w-[8px] h-px bg-[#2e2d2a]" />
      </WindowBtn>
      <WindowBtn className="bg-[#6f6e68]">
        <span className="w-[8px] h-[6px] border border-[#2e2d2a]" />
      </WindowBtn>
      <WindowBtn className="bg-[#e9622b]">
        <svg width="8" height="8" viewBox="0 0 8 8">
          <path d="m1 1 6 6m0-6-6 6" stroke="#3a2014" strokeWidth="1.100" />
        </svg>
      </WindowBtn>
    </div>
  </div>
);

export default function App() {
  return (
    <div className="w-[1366px] h-[768px] flex flex-col overflow-hidden bg-[#bebebe]">
      <TopBar />
      <div className="flex-1 flex min-h-0">
        <Dock />
        <div className="w-[1299px] flex flex-col">
          <TitleBar />
          <div className="h-[73px] shrink-0 flex flex-col bg-linear-to-b from-[#f6f6f6] to-[#ececec] border-b border-[#8e8e8e]">
            <div className="w-[950px] bg-[#e4e4e4]">
              <Menu />
            </div>
            <div className="relative h-[27px] w-[950px] flex items-center pl-[11px] pb-px bg-linear-to-b from-[#ededed] to-[#bcbcbc]">
              <Grip />
              <Tools items={row1} />
            </div>
            <div className="relative h-[25px] w-[944px] flex items-center pl-[12px] pb-px bg-linear-to-b from-[#f0f0f0] to-[#c6c6c6]">
              <Grip />
              <div className={`w-[114px] h-[19px] flex items-center bg-white border-t border-l border-[#222] ${UI}`}>
                <span className="flex-1 pl-[3px] italic text-[11.5px] text-[#222]">Calibri</span>
                <ComboBtn />
              </div>
              <div className={`ml-[10px] w-[46px] h-[19px] flex items-center bg-white border-t border-l border-[#222] ${UI}`}>
                <span className="flex-1 pl-[3px] text-[11.5px] text-[#222]">11</span>
                <ComboBtn />
              </div>
              <span className="ml-px" />
              <span className="w-[7px] flex justify-center">
                <span className="w-px h-[17px] bg-[#a0a0a0]" />
              </span>
              <Tools items={row2} />
            </div>
          </div>
          <div className="flex-1 flex min-h-0">
            <div className="w-[1251px] shrink-0 flex flex-col">
              <FormulaBar />
              <div className="flex-1 flex min-h-0">
                <Sheet />
                <VScroll />
              </div>
              <HScroll />
              <Tabs />
            </div>
            <Handle />
            <Sidebar />
          </div>
          <Status />
        </div>
      </div>
    </div>
  );
}
